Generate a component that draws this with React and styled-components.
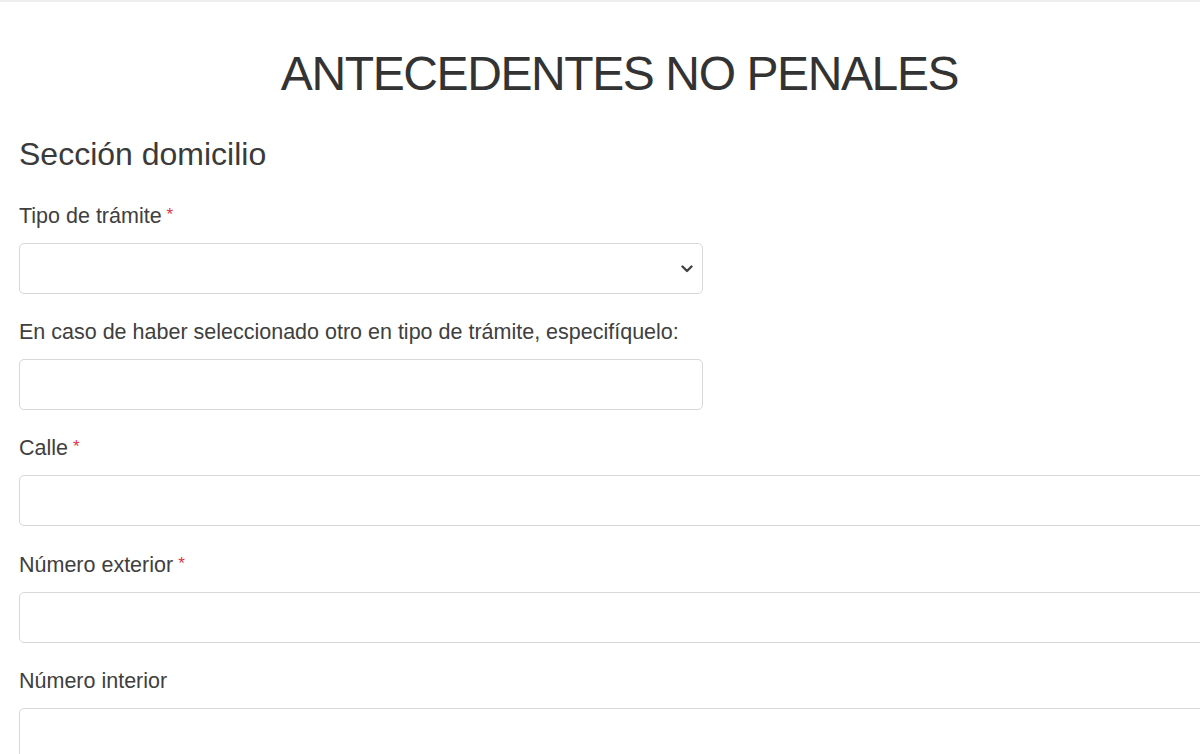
import React from "react";
import styled, { createGlobalStyle } from "styled-components";

const Global = createGlobalStyle`
  html, body {
    margin: 0;
    padding: 0;
    background: #ffffff;
    overflow: hidden;
    font-family: "Liberation Sans", Arial, sans-serif;
    color: #3a3a3a;
  }
`;

const TopBar = styled.div`
  height: 2px;
  background: #eeeeee;
`;

const Page = styled.main`
  width: 1201px;
  padding-left: 19px;
  box-sizing: content-box;
`;

const Title = styled.h1`
  margin: 43px 0 0;
  font-size: 48px;
  line-height: 57.6px;
  font-weight: 400;
  letter-spacing: -1.4px;
  text-align: center;
  color: #333333;
`;

const SectionTitle = styled.h4`
  margin: 32px 0 0;
  font-size: 32px;
  line-height: 38.4px;
  font-weight: 400;
  color: #3a3a3a;
`;

const Form = styled.form`
  margin-top: 26.2px;
  display: flex;
  flex-direction: column;
`;

const Field = styled.div`
  display: flex;
  flex-direction: column;
  margin-bottom: 21.6px;
`;

const Label = styled.label`
  font-size: 21.5px;
  line-height: 32px;
  color: #404040;
  margin-bottom: 11px;
`;

const Required = styled.span`
  color: #dc3545;
  font-size: 17px;
  margin-left: 5px;
  vertical-align: 3px;
`;

const Control = styled.div`
  position: relative;
  box-sizing: border-box;
  height: 51px;
  width: ${(p) => (p.$half ? "684px" : "100%")};
  border: 1.5px solid #d6d8da;
  border-radius: 5px;
  background: #ffffff;
`;

const Input = styled.input`
  box-sizing: border-box;
  width: 100%;
  height: 100%;
  border: none;
  outline: none;
  background: transparent;
  padding: 0 16px;
  font-family: inherit;
  font-size: 21px;
  color: #495057;
`;

const Chevron = styled.svg`
  position: absolute;
  right: 9px;
  top: 50%;
  transform: translateY(-50%);
  width: 12px;
  height: 8px;
`;

function FormField({ label, required, half, select }) {
  return (
    <Field>
      <Label>
        {label}
        {required && <Required>*</Required>}
      </Label>
      <Control $half={half}>
        <Input readOnly={select} />
        {select && (
          <Chevron viewBox="0 0 12 8">
            <path
              d="M1.5 1.5 L6 6 L10.5 1.5"
              fill="none"
              stroke="#444"
              strokeWidth="2.4"
              strokeLinecap="round"
              strokeLinejoin="round"
            />
          </Chevron>
        )}
      </Control>
    </Field>
  );
}

export default function App() {
  return (
    <>
      <Global />
      <TopBar />
      <Page>
        <Title>ANTECEDENTES NO PENALES</Title>
        <SectionTitle>Sección domicilio</SectionTitle>
        <Form>
          <FormField label="Tipo de trámite" required half select />
          <FormField
            label="En caso de haber seleccionado otro en tipo de trámite, especifíquelo:"
            half
          />
          <FormField label="Calle" required />
          <FormField label="Número exterior" required />
          <FormField label="Número interior" />
        </Form>
      </Page>
    </>
  );
}
